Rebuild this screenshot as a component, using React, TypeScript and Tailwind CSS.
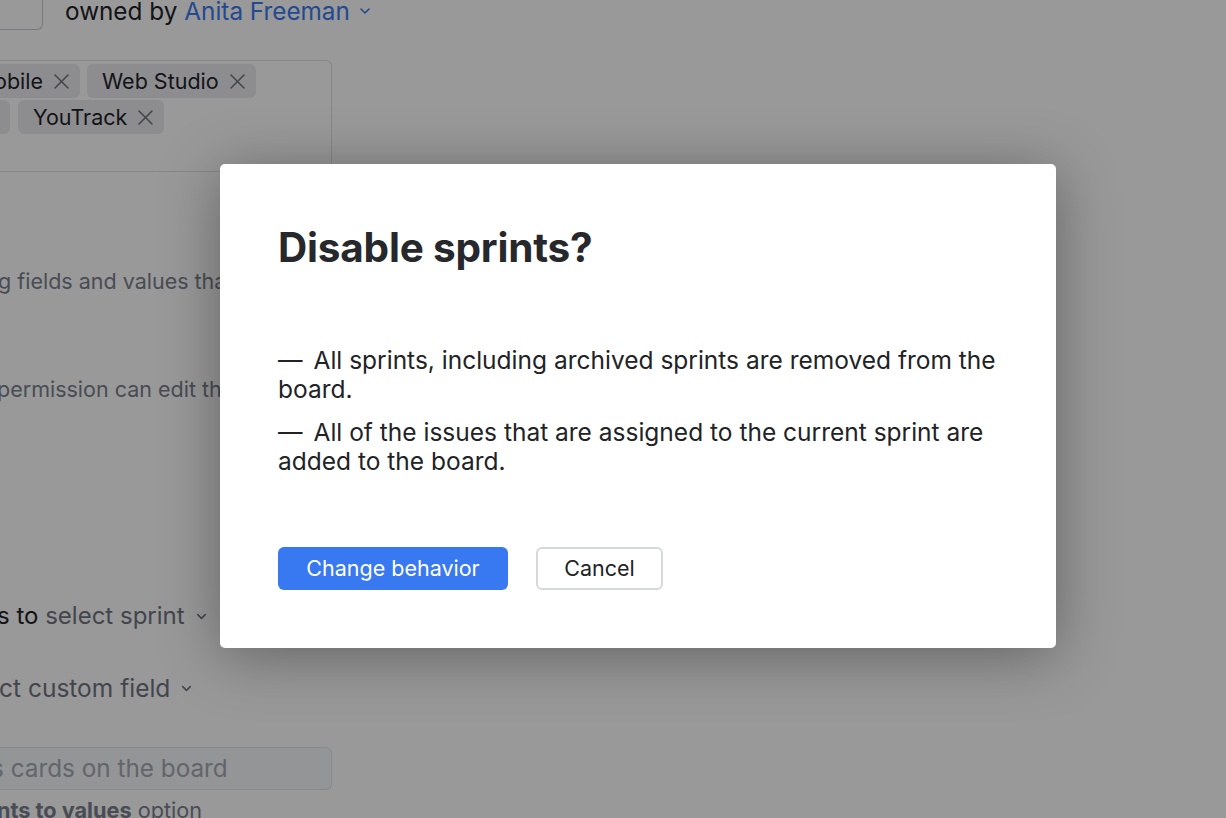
import { ChevronDown } from "lucide-react";

const font = { fontFamily: "Inter, 'Noto Sans', sans-serif" };

function Cross() {
  return (
    <svg width="15" height="15" viewBox="0 0 15 15" className="shrink-0" fill="none">
      <path d="M1 1L14 14M14 1L1 14" stroke="#737680" strokeWidth="1.6" strokeLinecap="round" />
    </svg>
  );
}

function Tag({ label, cut = false, width }: { label: string; cut?: boolean; width?: string }) {
  return (
    <div
      className={`flex h-[34px] shrink-0 items-center justify-end gap-[11px] overflow-hidden whitespace-nowrap bg-[#ebecf0] pl-[15px] pr-[11px] text-[21.5px] text-[#1f2329] ${
        cut ? "rounded-r-[6px]" : "rounded-[6px]"
      } ${width ?? ""}`}
    >
      <span className="shrink-0">{label}</span>
      <Cross />
    </div>
  );
}

export default function App() {
  return (
    <div className="relative h-[818px] w-[1226px] overflow-hidden bg-white" style={font}>
      {/* Page behind the dialog */}
      <div className="flex flex-col">
        <div className="flex h-[30px] items-start">
          <div className="h-[30px] w-[43px] rounded-br-[6px] border-b border-r border-[#c9cbd0]" />
          <div className="-mt-[3px] ml-[22px] flex items-center gap-[7px] text-[24.3px] leading-[28px] text-[#1f2329]">
            <span>owned by</span>
            <span className="text-[#3b7af0]">Anita Freeman</span>
            <ChevronDown className="h-[16px] w-[16px] text-[#3b7af0]" strokeWidth={2.4} />
          </div>
        </div>

        <div className="mt-[30px] flex h-[112px] w-[332px] flex-col gap-[2px] rounded-br-[6px] rounded-tr-[6px] border-y border-r border-[#dfe1e5] pt-[3px]">
          <div className="flex gap-[7px]">
            <Tag label="Mobile" cut width="w-[80px] !pl-0" />
            <Tag label="Web Studio" />
          </div>
          <div className="flex gap-[8px]">
            <div className="h-[34px] w-[10px] shrink-0 rounded-r-[6px] bg-[#ebecf0]" />
            <Tag label="YouTrack" />
          </div>
        </div>

        <div className="mt-[95px] whitespace-nowrap text-[21.5px] leading-[28px] text-[#7a7f8c] -ml-[2px]">
          g fields and values that are used on the board
        </div>
        <div className="mt-[80px] whitespace-nowrap text-[21.5px] leading-[28px] text-[#7a7f8c] -ml-[3px]">
          permission can edit the board settings
        </div>

        <div className="mt-[198px] flex items-center gap-[9px] whitespace-nowrap text-[24px] leading-[30px] -ml-[3px]">
          <span className="text-[#1f2329]">
            s to <span className="text-[#6f7480]">select sprint</span>
          </span>
          <ChevronDown className="h-[15px] w-[15px] text-[#6f7480]" strokeWidth={2.4} />
        </div>
        <div className="mt-[42px] flex items-center gap-[9px] whitespace-nowrap text-[24.5px] leading-[30px] text-[#6f7480] -ml-[1px]">
          <span>ct custom field</span>
          <ChevronDown className="h-[15px] w-[15px] text-[#6f7480]" strokeWidth={2.4} />
        </div>

        <div className="mt-[44px] flex h-[43px] w-[332px] items-center overflow-hidden whitespace-nowrap rounded-r-[6px] border-y border-r border-[#e3e4e8] bg-[#f7f8fa] text-[24.3px] text-[#a4a8b2]">
          <span className="-ml-[9px]">s cards on the board</span>
        </div>
        <div className="mt-[6px] whitespace-nowrap text-[21.7px] leading-[28px] text-[#7a7f8c] -ml-[3px]">
          <span className="font-bold">nts to values</span> option
        </div>
      </div>

      {/* Modal overlay */}
      <div className="absolute inset-0 bg-black/40 pl-[220px] pt-[164px]">
        <div className="flex h-[484px] w-[836px] flex-col rounded-[5px] bg-white pl-[58px] pr-[56px] pb-[58px] shadow-[0_8px_60px_rgba(0,0,0,0.35)]">
          <h1 className="mt-[60px] text-[40.5px] font-bold leading-[48px] tracking-[-0.2px] text-[#27282c]">
            Disable sprints?
          </h1>
          <div className="mt-[74px] flex flex-col gap-[14px] text-[24.5px] leading-[29px] text-[#222326]">
            <p>
              <span className="mr-[11px]">—</span>All sprints, including archived sprints are removed from the board.
            </p>
            <p>
              <span className="mr-[11px]">—</span>All of the issues that are assigned to the current sprint are added to the board.
            </p>
          </div>
          <div className="mt-auto flex gap-[28px]">
            <button className="flex h-[43px] w-[230px] items-center justify-center rounded-[6px] bg-[#3878f0] text-[21.5px] text-white">
              Change behavior
            </button>
            <button className="flex h-[43px] w-[127px] items-center justify-center rounded-[6px] border-2 border-[#d6d8dc] bg-white text-[21.5px] text-[#222326]">
              Cancel
            </button>
          </div>
        </div>
      </div>
    </div>
  );
}
